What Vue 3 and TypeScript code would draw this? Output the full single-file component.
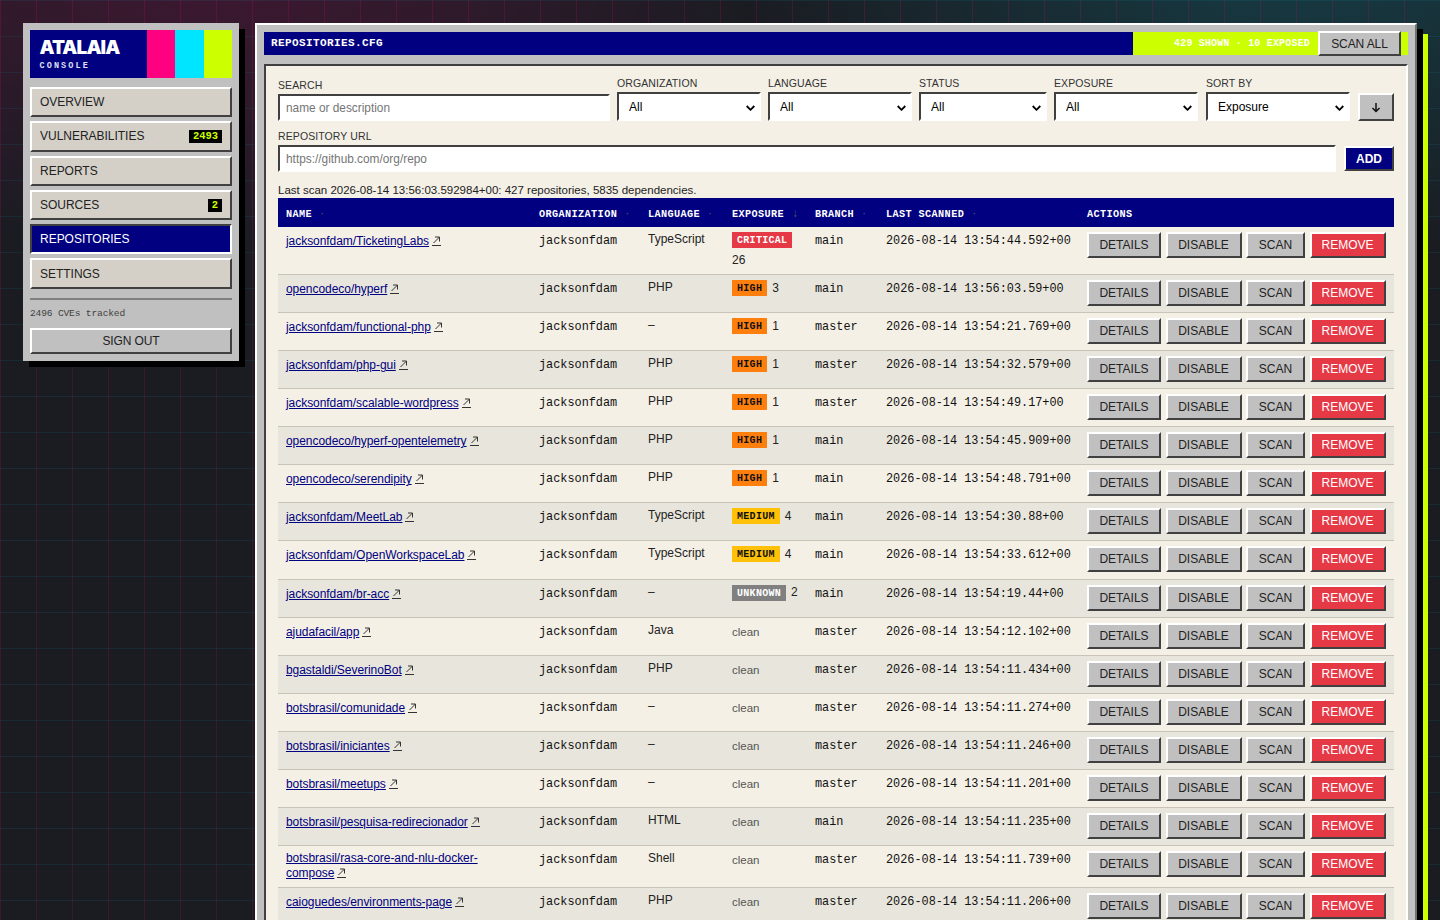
<script setup lang="ts">
interface Repo {
  name: string
  lang: string
  sev?: string
  count?: number
  branch: string
  scanned: string
  wrap?: boolean
}

const repos: Repo[] = [
  { name: 'jacksonfdam/TicketingLabs', lang: 'TypeScript', sev: 'critical', count: 26, branch: 'main', scanned: '2026-08-14 13:54:44.592+00' },
  { name: 'opencodeco/hyperf', lang: 'PHP', sev: 'high', count: 3, branch: 'main', scanned: '2026-08-14 13:56:03.59+00' },
  { name: 'jacksonfdam/functional-php', lang: '–', sev: 'high', count: 1, branch: 'master', scanned: '2026-08-14 13:54:21.769+00' },
  { name: 'jacksonfdam/php-gui', lang: 'PHP', sev: 'high', count: 1, branch: 'master', scanned: '2026-08-14 13:54:32.579+00' },
  { name: 'jacksonfdam/scalable-wordpress', lang: 'PHP', sev: 'high', count: 1, branch: 'master', scanned: '2026-08-14 13:54:49.17+00' },
  { name: 'opencodeco/hyperf-opentelemetry', lang: 'PHP', sev: 'high', count: 1, branch: 'main', scanned: '2026-08-14 13:54:45.909+00' },
  { name: 'opencodeco/serendipity', lang: 'PHP', sev: 'high', count: 1, branch: 'main', scanned: '2026-08-14 13:54:48.791+00' },
  { name: 'jacksonfdam/MeetLab', lang: 'TypeScript', sev: 'medium', count: 4, branch: 'main', scanned: '2026-08-14 13:54:30.88+00' },
  { name: 'jacksonfdam/OpenWorkspaceLab', lang: 'TypeScript', sev: 'medium', count: 4, branch: 'main', scanned: '2026-08-14 13:54:33.612+00' },
  { name: 'jacksonfdam/br-acc', lang: '–', sev: 'unknown', count: 2, branch: 'main', scanned: '2026-08-14 13:54:19.44+00' },
  { name: 'ajudafacil/app', lang: 'Java', branch: 'master', scanned: '2026-08-14 13:54:12.102+00' },
  { name: 'bgastaldi/SeverinoBot', lang: 'PHP', branch: 'master', scanned: '2026-08-14 13:54:11.434+00' },
  { name: 'botsbrasil/comunidade', lang: '–', branch: 'master', scanned: '2026-08-14 13:54:11.274+00' },
  { name: 'botsbrasil/iniciantes', lang: '–', branch: 'master', scanned: '2026-08-14 13:54:11.246+00' },
  { name: 'botsbrasil/meetups', lang: '–', branch: 'master', scanned: '2026-08-14 13:54:11.201+00' },
  { name: 'botsbrasil/pesquisa-redirecionador', lang: 'HTML', branch: 'main', scanned: '2026-08-14 13:54:11.235+00' },
  { name: 'botsbrasil/rasa-core-and-nlu-docker-compose', lang: 'Shell', branch: 'master', scanned: '2026-08-14 13:54:11.739+00', wrap: true },
  { name: 'caioguedes/environments-page', lang: 'PHP', branch: 'master', scanned: '2026-08-14 13:54:11.206+00' },
]

const nav = [
  { label: 'OVERVIEW' },
  { label: 'VULNERABILITIES', badge: '2493' },
  { label: 'REPORTS' },
  { label: 'SOURCES', badge: '2' },
  { label: 'REPOSITORIES', active: true },
  { label: 'SETTINGS' },
]

const filters = [
  { label: 'ORGANIZATION', value: 'All', cls: 'w144' },
  { label: 'LANGUAGE', value: 'All', cls: 'w144' },
  { label: 'STATUS', value: 'All', cls: 'w128' },
  { label: 'EXPOSURE', value: 'All', cls: 'w144' },
  { label: 'SORT BY', value: 'Exposure', cls: 'w144 sort' },
]

const heads = [
  { label: 'NAME', mark: '·' },
  { label: 'ORGANIZATION', mark: '·' },
  { label: 'LANGUAGE', mark: '·' },
  { label: 'EXPOSURE', mark: '↓' },
  { label: 'BRANCH', mark: '·' },
  { label: 'LAST SCANNED', mark: '·' },
  { label: 'ACTIONS', mark: '' },
]
</script>

<template>
  <div class="desk">
    <aside class="side">
      <div class="brand">
        <div class="brand-text">
          <div class="logo">ATALAIA</div>
          <div class="sub">CONSOLE</div>
        </div>
        <i class="sw pink"></i><i class="sw cyan"></i><i class="sw lime"></i>
      </div>
      <nav class="nav">
        <a v-for="n in nav" :key="n.label" class="nav-item" :class="{ active: n.active }">
          <span>{{ n.label }}</span>
          <b v-if="n.badge" class="count">{{ n.badge }}</b>
        </a>
      </nav>
      <div class="rule"></div>
      <div class="tracked">2496 CVEs tracked</div>
      <button class="signout">SIGN OUT</button>
    </aside>

    <main class="win">
      <header class="title">
        <div class="title-name">REPOSITORIES.CFG</div>
        <div class="title-stat">
          <span>429 SHOWN · 10 EXPOSED</span>
          <button class="scan-all">SCAN ALL</button>
        </div>
      </header>

      <section class="panel">
        <div class="filters">
          <label class="field search">
            <span class="lbl">SEARCH</span>
            <input class="inp" placeholder="name or description" />
          </label>
          <label v-for="f in filters" :key="f.label" class="field" :class="f.cls">
            <span class="lbl">{{ f.label }}</span>
            <span class="sel-wrap">
              <select class="sel"><option>{{ f.value }}</option></select>
              <svg class="chev" width="9" height="6" viewBox="0 0 9 6"><path d="M.7 1l3.8 3.8L8.3 1" fill="none" stroke="#000" stroke-width="1.8" /></svg>
            </span>
          </label>
          <button class="dir" aria-label="Sort direction">
            <svg width="10" height="11" viewBox="0 0 10 11"><path d="M5 1v8.5M1.5 6L5 9.5 8.5 6" fill="none" stroke="#111" stroke-width="1.5" /></svg>
          </button>
        </div>

        <div class="url-row">
          <label class="field grow">
            <span class="lbl">REPOSITORY URL</span>
            <input class="inp" placeholder="https://github.com/org/repo" />
          </label>
          <button class="add">ADD</button>
        </div>

        <p class="last">Last scan 2026-08-14 13:56:03.592984+00: 427 repositories, 5835 dependencies.</p>

        <div class="table">
          <div class="row head">
            <div v-for="h in heads" :key="h.label" class="th">
              {{ h.label }}<span class="mark">{{ h.mark }}</span>
            </div>
          </div>
          <div v-for="r in repos" :key="r.name" class="row body">
            <div class="td name" :class="{ wrapped: r.wrap }">
              <a class="repo">{{ r.name }}</a>
              <svg class="ext" width="9" height="10" viewBox="0 0 9 10"><path d="M1.5 7L7.5 1M3 1h4.5v4.5M0 9.5h9" fill="none" stroke="#333" stroke-width="1" /></svg>
            </div>
            <div class="td mono">jacksonfdam</div>
            <div class="td lang">{{ r.lang }}</div>
            <div class="td expo">
              <template v-if="r.sev">
                <span class="sev" :class="r.sev">{{ r.sev.toUpperCase() }}</span>
                <span class="num">{{ r.count }}</span>
              </template>
              <span v-else class="clean">clean</span>
            </div>
            <div class="td mono">{{ r.branch }}</div>
            <div class="td mono">{{ r.scanned }}</div>
            <div class="td acts">
              <button class="btn">DETAILS</button>
              <button class="btn">DISABLE</button>
              <button class="btn">SCAN</button>
              <button class="btn danger">REMOVE</button>
            </div>
          </div>
        </div>
      </section>
    </main>
  </div>
</template>

<style>
html, body { margin: 0; height: 100%; overflow: hidden; background: #1a1c22; }
</style>

<style scoped>
.desk {
  height: 920px;
  box-sizing: border-box;
  overflow: hidden;
  padding: 23px;
  display: flex;
  align-items: flex-start;
  gap: 16px;
  font-family: "Liberation Sans", Arial, sans-serif;
  font-size: 12px;
  color: #111;
  background-color: #1a1c22;
  background-image:
    linear-gradient(rgba(0, 229, 255, 0.07) 1px, transparent 1px),
    linear-gradient(90deg, rgba(255, 0, 128, 0.16) 1px, transparent 1px),
    radial-gradient(ellipse 560px 300px at 15% -5%, rgba(255, 0, 128, 0.17), transparent 100%),
    radial-gradient(ellipse 560px 300px at 90% -5%, rgba(0, 229, 255, 0.16), transparent 100%);
  background-size: 36px 36px, 36px 36px, auto, auto;
}

button { font-family: inherit; cursor: pointer; }

.side {
  width: 216px;
  flex: none;
  box-sizing: border-box;
  padding: 7px;
  background: #c0c0c0;
  box-shadow: 6px 6px 0 #000;
}
.brand {
  display: flex;
  height: 48px;
  background: #000080;
  color: #fff;
}
.brand-text { flex: 1; padding: 7px 0 0 9.5px; }
.logo {
  font-family: Inter, "Liberation Sans", sans-serif;
  font-weight: 900;
  font-size: 19px;
  line-height: 21px;
  letter-spacing: -0.9px;
}
.sub {
  font-family: "Liberation Mono", monospace;
  font-weight: 700;
  font-size: 8.5px;
  line-height: 11px;
  margin-top: 3px;
  letter-spacing: 2.1px;
  color: #dfe0f2;
}
.sw { display: block; width: 28.3px; }
.pink { background: #ff0080; }
.cyan { background: #00e5ff; }
.lime { background: #ccff00; }

.nav { display: flex; flex-direction: column; gap: 4px; margin-top: 9px; }
.nav-item {
  height: 30.3px;
  box-sizing: border-box;
  display: flex;
  align-items: center;
  justify-content: space-between;
  padding: 0 8px;
  background: #d4d0c8;
  border: 2px solid;
  border-color: #fff #404040 #404040 #fff;
  letter-spacing: -0.02px;
  color: #222;
}
.nav-item.active {
  background: #000080;
  color: #fff;
  border-color: #404040 #fff #fff #404040;
}
.count {
  background: #000;
  color: #ccff00;
  font-family: "Liberation Mono", monospace;
  font-size: 10.5px;
  line-height: 13px;
  padding: 0 4px;
}
.rule { height: 2px; background: #808080; margin-top: 9.2px; }
.tracked {
  font-family: "Liberation Mono", monospace;
  font-size: 9.6px;
  line-height: 12px;
  letter-spacing: -0.17px;
  color: #404040;
  margin-top: 8px;
}
.signout {
  display: block;
  width: 100%;
  height: 26px;
  margin-top: 8px;
  padding: 0;
  background: #c0c0c0;
  border: 2px solid;
  border-color: #fff #404040 #404040 #fff;
  font-size: 12px;
  letter-spacing: -0.1px;
  color: #222;
}

.win {
  flex: 1;
  min-width: 0;
  box-sizing: border-box;
  padding: 7px;
  background: #c0c0c0;
  border: 2px solid;
  border-color: #fff #707070 #707070 #fff;
  box-shadow: 6px 6px 0 #000, 11px 11px 0 #ccff00;
}
.title { display: flex; height: 23px; background: #000080; }
.title-name {
  flex: 1;
  padding-left: 7px;
  font-family: "Liberation Mono", monospace;
  font-weight: 700;
  font-size: 11px;
  line-height: 23px;
  letter-spacing: 0.4px;
  color: #fff;
}
.title-stat {
  display: flex;
  align-items: center;
  gap: 8px;
  padding: 0 7px 0 41px;
  background: #ccff00;
  font-family: "Liberation Mono", monospace;
  font-weight: 700;
  font-size: 10px;
  letter-spacing: 0.18px;
  color: #fff;
}
.scan-all {
  width: 83px;
  height: 25px;
  padding: 0;
  flex: none;
  background: #c0c0c0;
  border: 2px solid;
  border-color: #fff #404040 #404040 #fff;
  font-family: "Liberation Sans", Arial, sans-serif;
  font-size: 12px;
  font-weight: 400;
  letter-spacing: -0.1px;
  color: #222;
}

.panel {
  margin-top: 9px;
  padding: 11px 12px 12px;
  background: #f4f0e6;
  border: 2px solid;
  border-color: #404040 #fff #fff #404040;
  height: 900px;
  box-sizing: border-box;
}
.filters { display: flex; align-items: flex-end; gap: 7px; }
.field { display: flex; flex-direction: column; }
.search { width: 332px; }
.w144 { width: 144px; }
.w128 { width: 128px; }
.sort { margin-left: 1px; }
.grow { flex: 1; }
.lbl {
  font-size: 10.5px;
  line-height: 13px;
  letter-spacing: 0.1px;
  color: #333;
  margin-bottom: 2px;
}
.inp {
  display: block;
  box-sizing: border-box;
  width: 100%;
  height: 27px;
  padding: 0 6px;
  background: #fff;
  border: 2px solid;
  border-color: #404040 #fff #fff #404040;
  outline: 0;
  font: 11.85px "Liberation Sans", Arial, sans-serif;
  color: #111;
}
.inp::placeholder { color: #757575; opacity: 1; }
.sel-wrap { position: relative; display: block; }
.sel {
  display: block;
  box-sizing: border-box;
  width: 100%;
  height: 29px;
  padding: 0 10px;
  background: #fff;
  border: 2px solid;
  border-color: #404040 #fff #fff #404040;
  border-radius: 0;
  appearance: none;
  outline: 0;
  font: 12px "Liberation Sans", Arial, sans-serif;
  color: #000;
}
.chev { position: absolute; right: 6px; top: 13px; pointer-events: none; }
.dir {
  width: 36px;
  height: 28px;
  margin-left: 1px;
  padding: 0;
  display: flex;
  align-items: center;
  justify-content: center;
  background: #c0c0c0;
  border: 2px solid;
  border-color: #fff #404040 #404040 #fff;
}
.url-row { display: flex; align-items: flex-end; gap: 8px; margin-top: 9px; }
.add {
  width: 50px;
  height: 25px;
  margin-bottom: 1px;
  padding: 0;
  background: #000080;
  color: #fff;
  border: 2px solid;
  border-color: #fff #404040 #404040 #fff;
  font-size: 12px;
  font-weight: 700;
}
.last { margin: 11px 0 0; line-height: 15px; height: 15px; font-size: 11.5px; color: #222; }

.row {
  display: grid;
  grid-template-columns: 253px 109px 84px 83px 71px 201px 1fr;
}
.head { height: 29px; background: #000080; }
.th {
  padding: 0 8px;
  font-family: "Liberation Mono", monospace;
  font-weight: 700;
  font-size: 10.2px;
  line-height: 31px;
  letter-spacing: 0.4px;
  color: #fff;
  white-space: nowrap;
}
.mark {
  margin-left: 8px;
  font-family: "Liberation Sans", Arial, sans-serif;
  font-size: 12px;
  color: #555;
  font-weight: 400;
}
.body {
  min-height: 38.07px;
  box-sizing: border-box;
  border-bottom: 1px solid #c8c4b8;
}
.body:nth-child(odd) { background: #e8e6dc; }
.td { padding: 5px 8px 6px; line-height: 15px; min-width: 0; }
.name { padding-top: 7px; padding-bottom: 4px; }
.name.wrapped { padding-top: 5.5px; padding-bottom: 5.5px; }
.repo { color: #000080; text-decoration: underline; font-size: 12px; letter-spacing: -0.05px; }
.ext { margin-left: 3px; vertical-align: -1px; }
.mono {
  font-family: "Liberation Mono", monospace;
  font-size: 11.85px;
  padding-top: 7px;
  padding-bottom: 4px;
  color: #111;
}
.lang { padding-top: 5px; font-size: 12px; color: #222; }
.expo { display: flex; flex-wrap: wrap; align-items: center; column-gap: 5px; row-gap: 5px; align-content: flex-start; }
.sev {
  height: 16px;
  padding: 0 5px;
  font-family: "Liberation Mono", monospace;
  font-weight: 700;
  font-size: 10px;
  line-height: 17px;
  letter-spacing: 0.3px;
}
.critical { background: #e63946; color: #fff; }
.high { background: #ff7f0e; color: #111; }
.medium { background: #ffc107; color: #111; }
.unknown { background: #808080; color: #fff; }
.num { line-height: 15px; font-size: 12px; color: #222; }
.clean { padding-top: 2px; font-size: 11.5px; color: #555; }
.acts {
  display: grid;
  grid-template-columns: 74px 76px 59px 76px;
  justify-content: start;
  column-gap: 4.5px;
  padding: 5px 0 6px 8px;
}
.btn {
  height: 26px;
  padding: 0;
  background: #c0c0c0;
  border: 2px solid;
  border-color: #fff #404040 #404040 #fff;
  font-size: 12px;
  color: #222;
}
.danger { background: #e63946; color: #fff; }
</style>
